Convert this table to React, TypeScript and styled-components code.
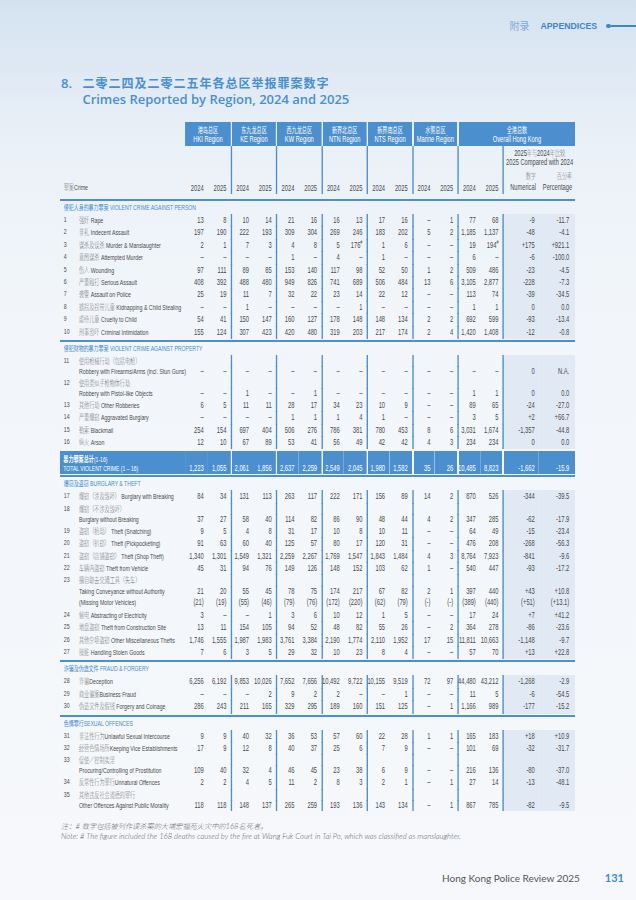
import React from "react";
import styled, { createGlobalStyle } from "styled-components";

const BLUE = "#4b8fcf";
const TINT = "#e1e9f4";
const INK = "#4a4a4c";
const SANS = `"Liberation Sans", "Noto Sans CJK SC", sans-serif`;
const CJK = `"Noto Sans CJK SC", sans-serif`;
const HUMANIST = `Lato, "Noto Sans CJK SC", sans-serif`;
// the table is laid out wide, then squeezed horizontally like the printed page
const COLS = "28.29px 158.05px repeat(14, 33.73px) 53.99px 53.84px";
const LINE_W = 2.2;
const PAD = 6.34;
const PAD_LAST = 8.9;

const GlobalStyle = createGlobalStyle`
  html, body {
    margin: 0;
    padding: 0;
    background: #f5f8fb;
  }
  body {
    font-family: ${SANS};
    color: ${INK};
  }
`;

const Page = styled.div`
  width: 636px;
  height: 900px;
  overflow: hidden;
  background: linear-gradient(
    180deg,
    #d4e2f0 0px,
    #dfe9f4 70px,
    #ebf1f8 150px,
    #f2f6fa 320px,
    #f6f8fb 900px
  );
`;

const TopBar = styled.div`
  display: flex;
  align-items: center;
  justify-content: flex-end;
  padding-top: 20px;
  height: 12px;
  line-height: 12px;
`;

const TopZh = styled.span`
  font-family: ${CJK};
  font-size: 10px;
  color: #7eaadb;
  margin-right: 11px;
`;

const TopEn = styled.span`
  font-weight: 700;
  font-size: 8.7px;
  color: #3f86c9;
`;

const TopRule = styled.span`
  display: flex;
  align-items: center;
  margin-left: 9px;
  width: 30px;
  height: 12px;
  &::before {
    content: "";
    flex: none;
    width: 4.5px;
    height: 4.5px;
    border-radius: 50%;
    background: #3f86c9;
  }
  &::after {
    content: "";
    flex: 1;
    height: 1.3px;
    background: #3f86c9;
  }
`;

const TitleBlock = styled.div`
  display: flex;
  margin: 42.7px 0 0 61px;
  color: #4a8fd0;
`;

const TitleNo = styled.div`
  width: 21.4px;
  font: 600 13px "Open Sans", sans-serif;
  line-height: 16px;
`;

const TitleZh = styled.div`
  font: 700 12px ${CJK};
  letter-spacing: 1px;
  line-height: 16px;
`;

const TitleEn = styled.div`
  font: 600 13px "Open Sans", sans-serif;
  line-height: 16px;
`;

const Squeeze = styled.div`
  width: 766.4px;
  margin: 15.3px 0 0 60px;
  transform: scaleX(0.6724);
  transform-origin: 0 0;
`;

const HeadGrid = styled.div`
  display: grid;
  grid-template-columns: ${COLS};
  grid-template-rows: 24px 48px;
  margin-bottom: 3px;
`;

const RegionBox = styled.div<{ $col: number; $span: number; $first?: boolean }>`
  grid-row: 1;
  grid-column: ${(p) => p.$col} / span ${(p) => p.$span};
  background: ${BLUE};
  background-clip: padding-box;
  border-left: ${(p) => (p.$first ? "0" : `${LINE_W}px solid transparent`)};
  color: #fff;
  text-align: center;
  padding-top: 3.5px;
  line-height: 9.7px;
  font-size: 8.5px;
  white-space: nowrap;
`;

const BoxZh = styled.div`
  font-family: ${CJK};
  font-size: 7.6px;
`;

const CrimeHead = styled.div`
  grid-row: 2;
  grid-column: 1 / 3;
  align-self: end;
  padding: 0 0 1px 5.6px;
  line-height: 10px;
  font-size: 7.8px;
`;

const YearHead = styled.div<{ $start: boolean }>`
  grid-row: 2;
  display: flex;
  align-items: flex-end;
  justify-content: flex-end;
  padding: 0 ${PAD}px 1px 0;
  line-height: 10px;
  font-size: 8.6px;
  border-left: ${(p) => (p.$start ? `${LINE_W}px solid ${BLUE}` : "0")};
`;

const CompareHead = styled.div`
  grid-row: 2;
  grid-column: 17 / 19;
  border-left: ${LINE_W}px solid ${BLUE};
  display: flex;
  flex-direction: column;
  justify-content: space-between;
  padding: 2.5px 0 0.5px;
  font-size: 8.5px;
`;

const CompareTitle = styled.div`
  text-align: center;
  line-height: 9px;
  white-space: nowrap;
`;

const CompareCols = styled.div`
  display: grid;
  grid-template-columns: 51.79px 53.84px;
  line-height: 11px;
  text-align: right;
  white-space: nowrap;
  & > div {
    padding-right: 4.4px;
  }
`;

const Zh = styled.span<{ $size?: number }>`
  font-family: ${CJK};
  font-size: ${(p) => p.$size ?? 7.6}px;
  font-weight: 300;
  color: #6e6e70;
`;

const SectionBar = styled.div`
  padding-top: 2px;
`;

const SectionInner = styled.div`
  border-top: 2px solid ${BLUE};
  line-height: 12px;
  padding-left: 5.6px;
  color: #3f8bd0;
  font-size: 7.6px;
  white-space: nowrap;
  span {
    color: #3f8bd0;
    font-weight: 400;
  }
`;

const RowGrid = styled.div<{ $h: number }>`
  display: grid;
  grid-template-columns: ${COLS};
  height: ${(p) => p.$h}px;
  line-height: ${(p) => p.$h}px;
`;

const Idx = styled.div`
  padding-left: 5.6px;
  font-size: 7.8px;
`;

const Label = styled.div`
  font-size: 7.8px;
  white-space: nowrap;
`;

const Val = styled.div<{ $i: number }>`
  display: flex;
  justify-content: flex-end;
  white-space: nowrap;
  font-size: 8.6px;
  padding-right: ${(p) => (p.$i === 15 ? PAD_LAST : PAD)}px;
  border-left: ${(p) =>
    p.$i >= 2 && p.$i % 2 === 0 ? `${LINE_W}px solid ${BLUE}` : "0"};
  background: ${(p) => (p.$i >= 14 ? TINT : "transparent")};
`;

const Sup = styled.sup`
  font-size: 5.5px;
  vertical-align: super;
  line-height: 0;
`;

const TotalGrid = styled.div`
  display: grid;
  grid-template-columns: ${COLS};
  height: 22px;
  margin-top: 3px;
  color: #fff;
`;

const TotalLabel = styled.div`
  grid-column: 1 / 3;
  background: ${BLUE};
  padding: 2.3px 0 0 4.9px;
  line-height: 9.6px;
  font-size: 7.5px;
  white-space: nowrap;
`;

const TotalZh = styled.span`
  font-family: ${CJK};
  font-size: 7.6px;
  font-weight: 700;
`;

const TotalVal = styled.div<{ $i: number }>`
  display: flex;
  align-items: flex-end;
  justify-content: flex-end;
  background: ${BLUE};
  background-clip: padding-box;
  border-left: ${(p) =>
    p.$i >= 2 && p.$i % 2 === 0 ? `${LINE_W}px solid transparent` : "0"};
  padding: 0 ${(p) => (p.$i === 15 ? PAD_LAST : PAD)}px 0.8px 0;
  line-height: 9.6px;
  font-size: 8.6px;
  white-space: nowrap;
`;

const Note = styled.div`
  margin: 10px 0 0 61px;
  font-family: ${HUMANIST};
  font-style: italic;
  font-weight: 300;
  font-size: 7.7px;
  line-height: 10.3px;
  color: #616163;
  white-space: nowrap;
`;

const Footer = styled.div`
  display: flex;
  justify-content: flex-end;
  align-items: center;
  gap: 25px;
  margin-top: 30px;
  padding-right: 12px;
  line-height: 14px;
  font-family: ${HUMANIST};
`;

const FooterText = styled.span`
  font-size: 10px;
  color: #555;
`;

const PageNo = styled.span`
  font-size: 11px;
  font-weight: 700;
  color: #3f8bd0;
`;

type Item =
  | { t: "sec"; zh: string; en: string; sep?: string }
  | { t: "row"; n?: string; zh?: string; en?: string; sep?: string; v?: string; h?: number }
  | { t: "total" };

const T = 11;

const ITEMS: Item[] = [
  { t: "sec", zh: "侵犯人身的暴力罪案", en: "VIOLENT CRIME AGAINST PERSON" },
  { t: "row", n: "1", zh: "强奸", en: "Rape", v: "13 8 10 14 21 16 16 13 17 16 – 1 77 68 -9 -11.7" },
  { t: "row", n: "2", zh: "非礼", en: "Indecent Assault", v: "197 190 222 193 309 304 269 246 183 202 5 2 1,185 1,137 -48 -4.1" },
  { t: "row", n: "3", zh: "谋杀及误杀", en: "Murder & Manslaughter", v: "2 1 7 3 4 8 5 176# 1 6 – – 19 194# +175 +921.1" },
  { t: "row", n: "4", zh: "意图谋杀", en: "Attempted Murder", v: "– – – – 1 – 4 – 1 – – – 6 – -6 -100.0" },
  { t: "row", n: "5", zh: "伤人", en: "Wounding", v: "97 111 89 85 153 140 117 98 52 50 1 2 509 486 -23 -4.5" },
  { t: "row", n: "6", zh: "严重殴打", en: "Serious Assault", v: "408 392 488 480 949 826 741 689 506 484 13 6 3,105 2,877 -228 -7.3" },
  { t: "row", n: "7", zh: "袭警", en: "Assault on Police", v: "25 19 11 7 32 22 23 14 22 12 – – 113 74 -39 -34.5" },
  { t: "row", n: "8", zh: "掳拐及拐带儿童", en: "Kidnapping & Child Stealing", v: "– – 1 – – – – 1 – – – – 1 1 0 0.0" },
  { t: "row", n: "9", zh: "虐待儿童", en: "Cruelty to Child", v: "54 41 150 147 160 127 178 148 148 134 2 2 692 599 -93 -13.4" },
  { t: "row", n: "10", zh: "刑事恐吓", en: "Criminal Intimidation", v: "155 124 307 423 420 480 319 203 217 174 2 4 1,420 1,408 -12 -0.8" },
  { t: "sec", zh: "侵犯财物的暴力罪案", en: "VIOLENT CRIME AGAINST PROPERTY" },
  { t: "row", n: "11", zh: "使用枪械行劫（包括电枪）", h: T },
  { t: "row", en: "Robbery with Firearms/Arms (incl. Stun Guns)", h: T, v: "– – – – – – – – – – – – – – 0 N.A." },
  { t: "row", n: "12", zh: "使用类似手枪物体行劫", h: T },
  { t: "row", en: "Robbery with Pistol-like Objects", h: T, v: "– – 1 – – 1 – – – – – – 1 1 0 0.0" },
  { t: "row", n: "13", zh: "其他行劫", en: "Other Robberies", v: "6 5 11 11 28 17 34 23 10 9 – – 89 65 -24 -27.0" },
  { t: "row", n: "14", zh: "严重爆窃", en: "Aggravated Burglary", v: "– – – – 1 1 1 4 1 – – – 3 5 +2 +66.7" },
  { t: "row", n: "15", zh: "勒索", en: "Blackmail", v: "254 154 697 404 506 276 786 381 780 453 8 6 3,031 1,674 -1,357 -44.8" },
  { t: "row", n: "16", zh: "纵火", en: "Arson", v: "12 10 67 89 53 41 56 49 42 42 4 3 234 234 0 0.0" },
  { t: "total" },
  { t: "sec", zh: "爆窃及盗窃", en: "BURGLARY & THEFT" },
  { t: "row", n: "17", zh: "爆窃（涉及毁坏）", en: "Burglary with Breaking", v: "84 34 131 113 263 117 222 171 156 89 14 2 870 526 -344 -39.5" },
  { t: "row", n: "18", zh: "爆窃（不涉及毁坏）", h: T },
  { t: "row", en: "Burglary without Breaking", h: T, v: "37 27 58 40 114 82 86 90 48 44 4 2 347 285 -62 -17.9" },
  { t: "row", n: "19", zh: "盗窃（抢劫）", en: "Theft (Snatching)", v: "9 5 4 8 31 17 10 8 10 11 – – 64 49 -15 -23.4" },
  { t: "row", n: "20", zh: "盗窃（扒窃）", en: "Theft (Pickpocketing)", v: "91 63 60 40 125 57 80 17 120 31 – – 476 208 -268 -56.3" },
  { t: "row", n: "21", zh: "盗窃（店铺盗窃）", en: "Theft (Shop Theft)", v: "1,340 1,301 1,549 1,321 2,259 2,267 1,769 1,547 1,843 1,484 4 3 8,764 7,923 -841 -9.6" },
  { t: "row", n: "22", zh: "车辆内盗窃", en: "Theft from Vehicle", v: "45 31 94 76 149 126 148 152 103 62 1 – 540 447 -93 -17.2" },
  { t: "row", n: "23", zh: "擅自取去交通工具（失车）", h: 11.5 },
  { t: "row", en: "Taking Conveyance without Authority", h: 11.5, v: "21 20 55 45 78 75 174 217 67 82 2 1 397 440 +43 +10.8" },
  { t: "row", en: "(Missing Motor Vehicles)", h: 11.5, v: "(21) (19) (55) (46) (79) (76) (172) (220) (62) (79) (-) (-) (389) (440) (+51) (+13.1)" },
  { t: "row", n: "24", zh: "偷电", en: "Abstracting of Electricity", v: "3 – – 1 3 6 10 12 1 5 – – 17 24 +7 +41.2" },
  { t: "row", n: "25", zh: "地盘盗窃", en: "Theft from Construction Site", v: "13 11 154 105 94 52 48 82 55 26 – 2 364 278 -86 -23.6" },
  { t: "row", n: "26", zh: "其他杂项盗窃", en: "Other Miscellaneous Thefts", v: "1,746 1,555 1,987 1,983 3,761 3,384 2,190 1,774 2,110 1,952 17 15 11,811 10,663 -1,148 -9.7" },
  { t: "row", n: "27", zh: "接赃", en: "Handling Stolen Goods", v: "7 6 3 5 29 32 10 23 8 4 – – 57 70 +13 +22.8" },
  { t: "sec", zh: "诈骗及伪造文件", en: "FRAUD & FORGERY" },
  { t: "row", n: "28", zh: "诈骗", en: "Deception", sep: "", v: "6,256 6,192 9,853 10,026 7,652 7,656 10,492 9,722 10,155 9,519 72 97 44,480 43,212 -1,268 -2.9" },
  { t: "row", n: "29", zh: "商业骗案", en: "Business Fraud", sep: "", v: "– – – 2 9 2 2 – – 1 – – 11 5 -6 -54.5" },
  { t: "row", n: "30", zh: "伪造文件及假钱", en: "Forgery and Coinage", v: "286 243 211 165 329 295 189 160 151 125 – 1 1,166 989 -177 -15.2" },
  { t: "sec", zh: "色情罪行", en: "SEXUAL OFFENCES", sep: "" },
  { t: "row", n: "31", zh: "非法性行为", en: "Unlawful Sexual Intercourse", sep: "", v: "9 9 40 32 36 53 57 60 22 28 1 1 165 183 +18 +10.9" },
  { t: "row", n: "32", zh: "经营色情场所", en: "Keeping Vice Establishments", sep: "", v: "17 9 12 8 40 37 25 6 7 9 – – 101 69 -32 -31.7" },
  { t: "row", n: "33", zh: "促使／控制卖淫", h: T },
  { t: "row", en: "Procuring/Controlling of Prostitution", h: T, v: "109 40 32 4 46 45 23 38 6 9 – – 216 136 -80 -37.0" },
  { t: "row", n: "34", zh: "反常性行为罪行", en: "Unnatural Offences", sep: "", v: "2 2 4 5 11 2 8 3 2 1 – 1 27 14 -13 -48.1" },
  { t: "row", n: "35", zh: "其他违反社会道德的罪行", h: T },
  { t: "row", en: "Other Offences Against Public Morality", h: T, v: "118 118 148 137 265 259 193 136 143 134 – 1 867 785 -82 -9.5" },
];

const TOTAL = "1,223 1,055 2,061 1,856 2,637 2,259 2,549 2,045 1,980 1,582 35 26 10,485 8,823 -1,662 -15.9";

const REGIONS = [
  { zh: "港岛总区", en: "HKI Region", col: 3, span: 2 },
  { zh: "东九龙总区", en: "KE Region", col: 5, span: 2 },
  { zh: "西九龙总区", en: "KW Region", col: 7, span: 2 },
  { zh: "新界北总区", en: "NTN Region", col: 9, span: 2 },
  { zh: "新界南总区", en: "NTS Region", col: 11, span: 2 },
  { zh: "水警总区", en: "Marine Region", col: 13, span: 2 },
  { zh: "全港总数", en: "Overall Hong Kong", col: 15, span: 4 },
];

const cells = (s?: string) => (s ? s.split(" ") : Array(16).fill(""));

const renderValue = (v: string) =>
  v.endsWith("#") ? (
    <span>
      {v.slice(0, -1)}
      <Sup>#</Sup>
    </span>
  ) : (
    <span>{v}</span>
  );

const TableHead = () => (
  <HeadGrid>
    {REGIONS.map((r, i) => (
      <RegionBox key={r.en} $col={r.col} $span={r.span} $first={i === 0}>
        <BoxZh>{r.zh}</BoxZh>
        <div>{r.en}</div>
      </RegionBox>
    ))}
    <CrimeHead>
      <Zh>罪案</Zh>Crime
    </CrimeHead>
    {Array.from({ length: 14 }, (_, i) => (
      <YearHead key={i} $start={i >= 2 && i % 2 === 0}>
        {i % 2 === 0 ? "2024" : "2025"}
      </YearHead>
    ))}
    <CompareHead>
      <CompareTitle>
        <div>
          2025<Zh>年与</Zh>2024<Zh>年比较</Zh>
        </div>
        <div>2025 Compared with 2024</div>
      </CompareTitle>
      <CompareCols>
        <div>
          <Zh>数字</Zh>
          <div>Numerical</div>
        </div>
        <div>
          <Zh>百分率</Zh>
          <div>Percentage</div>
        </div>
      </CompareCols>
    </CompareHead>
  </HeadGrid>
);

const App: React.FC = () => (
  <Page>
    <GlobalStyle />
    <TopBar>
      <TopZh>附录</TopZh>
      <TopEn>APPENDICES</TopEn>
      <TopRule />
    </TopBar>

    <TitleBlock>
      <TitleNo>8.</TitleNo>
      <div>
        <TitleZh>二零二四及二零二五年各总区举报罪案数字</TitleZh>
        <TitleEn>Crimes Reported by Region, 2024 and 2025</TitleEn>
      </div>
    </TitleBlock>

    <Squeeze>
      <TableHead />
      {ITEMS.map((item, k) => {
        if (item.t === "sec") {
          return (
            <SectionBar key={k}>
              <SectionInner>
                <Zh $size={7.4}>{item.zh}</Zh>
                {item.sep ?? " "}
                {item.en}
              </SectionInner>
            </SectionBar>
          );
        }
        if (item.t === "total") {
          return (
            <TotalGrid key={k}>
              <TotalLabel>
                <div>
                  <TotalZh>暴力罪案总计</TotalZh>(1-16)
                </div>
                <div>TOTAL VIOLENT CRIME (1 – 16)</div>
              </TotalLabel>
              {cells(TOTAL).map((v, i) => (
                <TotalVal key={i} $i={i}>
                  <span>{v}</span>
                </TotalVal>
              ))}
            </TotalGrid>
          );
        }
        return (
          <RowGrid key={k} $h={item.h ?? 12.4}>
            <Idx>{item.n}</Idx>
            <Label>
              {item.zh && <Zh>{item.zh}</Zh>}
              {item.zh && item.en ? item.sep ?? " " : ""}
              {item.en}
            </Label>
            {cells(item.v).map((v, i) => (
              <Val key={i} $i={i}>
                {renderValue(v)}
              </Val>
            ))}
          </RowGrid>
        );
      })}
    </Squeeze>

    <Note>
      <div>
        <Zh $size={7.2}>注：</Zh># <Zh $size={7.2}>数字包括被列作误杀案的大埔宏福苑火灾中的</Zh>168
        <Zh $size={7.2}>名死者。</Zh>
      </div>
      <div>
        Note: # The figure included the 168 deaths caused by the fire at Wang Fuk Court in Tai Po,
        which was classified as manslaughter.
      </div>
    </Note>

    <Footer>
      <FooterText>Hong Kong Police Review 2025</FooterText>
      <PageNo>131</PageNo>
    </Footer>
  </Page>
);

export default App;
